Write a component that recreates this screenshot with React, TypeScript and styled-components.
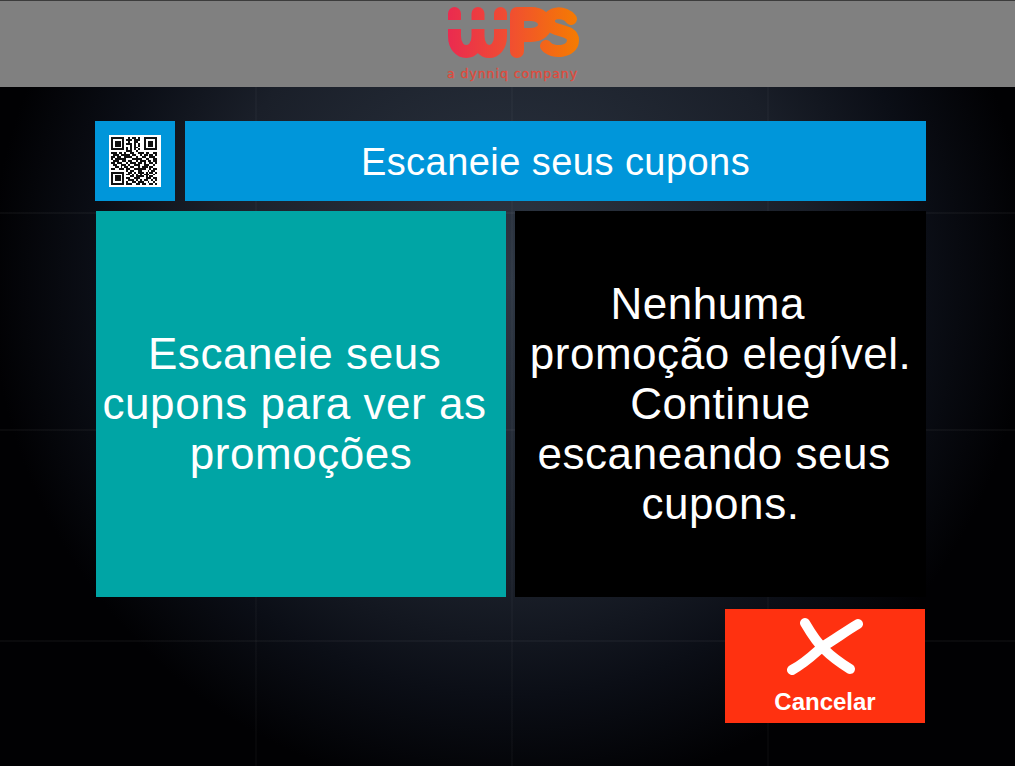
import React from "react";
import styled, { createGlobalStyle } from "styled-components";

const Global = createGlobalStyle`
  html, body {
    margin: 0;
    padding: 0;
    background: #000;
  }
`;

const Screen = styled.div`
  width: 1015px;
  height: 766px;
  overflow: hidden;
  font-family: "Liberation Sans", Arial, sans-serif;
  color: #fff;
  background-color: #000;
  background-image:
    linear-gradient(90deg, transparent 255px, rgba(255, 255, 255, 0.025) 255px, rgba(255, 255, 255, 0.025) 257px, transparent 257px),
    linear-gradient(90deg, transparent 511px, rgba(255, 255, 255, 0.025) 511px, rgba(255, 255, 255, 0.025) 513px, transparent 513px),
    linear-gradient(90deg, transparent 767px, rgba(255, 255, 255, 0.025) 767px, rgba(255, 255, 255, 0.025) 769px, transparent 769px),
    linear-gradient(180deg, transparent 212px, rgba(255, 255, 255, 0.035) 212px, rgba(255, 255, 255, 0.035) 214px, transparent 214px),
    linear-gradient(180deg, transparent 429px, rgba(255, 255, 255, 0.035) 429px, rgba(255, 255, 255, 0.035) 431px, transparent 431px),
    linear-gradient(180deg, transparent 640px, rgba(255, 255, 255, 0.035) 640px, rgba(255, 255, 255, 0.035) 642px, transparent 642px),
    radial-gradient(ellipse 520px 520px at 510px 280px, #2e3744 0%, #1a1f29 58%, #0b0e16 80%, #010103 100%);
`;

const Header = styled.header`
  height: 87px;
  box-sizing: border-box;
  border-top: 1px solid #3c3c3c;
  padding-left: 10px;
  background: #808080;
  display: flex;
  flex-direction: column;
  align-items: center;
`;

const Logo = styled.svg`
  display: block;
  width: 132px;
  height: 54px;
  margin-top: 5px;
`;

const Tagline = styled.div`
  font-family: "DejaVu Sans", sans-serif;
  font-size: 12.5px;
  line-height: 14px;
  letter-spacing: 0.95px;
  white-space: nowrap;
  margin-top: 7px;
  color: #e04b3c;
  -webkit-text-stroke: 0.3px #e04b3c;
`;

const Main = styled.main`
  width: 831px;
  margin: 34px 0 0 95px;
  display: flex;
  flex-direction: column;
`;

const TitleRow = styled.div`
  display: flex;
  gap: 10px;
  height: 80px;
`;

const QrBox = styled.div`
  width: 80px;
  background: #0096da;
  display: flex;
  align-items: center;
  justify-content: center;
`;

const TitleBar = styled.h1`
  flex: 1;
  margin: 0;
  padding-top: 2px;
  box-sizing: border-box;
  background: #0096da;
  display: flex;
  align-items: center;
  justify-content: center;
  font-size: 38px;
  font-weight: 400;
  letter-spacing: 0.45px;
`;

const Panels = styled.div`
  display: flex;
  gap: 9px;
  margin: 10px 0 0 1px;
  height: 386px;
`;

const Panel = styled.div<{ $bg: string; $width: number }>`
  width: ${(p) => p.$width}px;
  background: ${(p) => p.$bg};
  display: flex;
  align-items: center;
  justify-content: center;
  text-align: center;
  font-size: 44px;
  line-height: 50px;
  letter-spacing: 0.55px;
  white-space: pre;
`;

const Footer = styled.div`
  display: flex;
  justify-content: flex-end;
  margin: 12px 1px 0 0;
`;

const CancelButton = styled.button`
  width: 200px;
  height: 114px;
  border: 0;
  padding: 8px 0 0;
  background: #ff3110;
  color: #fff;
  font-family: "Liberation Sans", Arial, sans-serif;
  font-size: 24px;
  font-weight: 700;
  line-height: 28px;
  display: flex;
  flex-direction: column;
  align-items: center;
`;

const CancelIcon = styled.svg`
  display: block;
  width: 90px;
  height: 60px;
  margin-bottom: 11px;
`;

const qrRows = [
  "1111111001011010011111110",
  "1000001011101110010000010",
  "1011101001001100010111010",
  "1011101011101010010111010",
  "1011101000101010010111010",
  "1000001010101100010000010",
  "1111111010101010011111110",
  "0000000011100100000000000",
  "1110110100110011101100110",
  "0111011111011001011011010",
  "1101100111100100110011100",
  "1011111100011111001100110",
  "0111001101100101110110110",
  "1101110010111011010011010",
  "0110011101001110011100100",
  "0011010110110010111011000",
  "1100111011001111110010110",
  "0000000010110011000101100",
  "1111111001101011101011010",
  "1000001011010101011100100",
  "1011101000110111101011000",
  "1011101011001110001110110",
  "1011101001110101011001010",
  "1000001010011011100100100",
  "1111111011100110110011010",
];

const QrCode = () => (
  <svg width="52" height="52" viewBox="-1 -1 27 27" shapeRendering="crispEdges">
    <rect x="-1" y="-1" width="27" height="27" fill="#fff" />
    {qrRows.map((row, y) =>
      row.split("").map((cell, x) =>
        cell === "1" ? <rect key={`${x}-${y}`} x={x} y={y} width="1" height="1" fill="#111" /> : null
      )
    )}
  </svg>
);

const App = () => (
  <>
    <Global />
    <Screen>
      <Header>
        <Logo viewBox="0 0 132 54">
          <defs>
            <linearGradient id="wps" x1="0" y1="0" x2="132" y2="0" gradientUnits="userSpaceOnUse">
              <stop offset="0" stopColor="#ea2a50" />
              <stop offset="0.5" stopColor="#f1502f" />
              <stop offset="1" stopColor="#f57c00" />
            </linearGradient>
          </defs>
          <g fill="none" stroke="url(#wps)" strokeLinecap="round" strokeLinejoin="round">
            <path
              d="M7.5 7.5 V30 C7.5 50.7 31 50.7 31 30 V7.5 M31 30 C31 50.7 53.5 50.7 53.5 30 V7.5"
              strokeWidth="13"
            />
            <path d="M70 45 V8 H84 C102.7 8 102.7 29 84 29 H70" strokeWidth="14" />
            <path d="M124 13 C118 5 101 5 102 16 C103 27 126 22 126 34 C126 47 105 48 99 40" strokeWidth="12" />
          </g>
          <rect x="0" y="14" width="62" height="9" fill="#808080" />
        </Logo>
        <Tagline>a dynniq company</Tagline>
      </Header>
      <Main>
        <TitleRow>
          <QrBox>
            <QrCode />
          </QrBox>
          <TitleBar>Escaneie seus cupons</TitleBar>
        </TitleRow>
        <Panels>
          <Panel $bg="#00a5a5" $width={410}>{"Escaneie seus \ncupons para ver as \npromoções"}</Panel>
          <Panel $bg="#000" $width={411}>{"Nenhuma  \npromoção elegível.\nContinue\nescaneando seus \ncupons."}</Panel>
        </Panels>
        <Footer>
          <CancelButton>
            <CancelIcon viewBox="0 0 90 60">
              <path
                d="M25 6 C32 18 38 27 45 33 C52 40 62 47 70 52 M12 53 C25 46 33 38 42 30 C54 23 66 14 78 7"
                fill="none"
                stroke="#fff"
                strokeWidth="10"
                strokeLinecap="round"
              />
            </CancelIcon>
            Cancelar
          </CancelButton>
        </Footer>
      </Main>
    </Screen>
  </>
);

export default App;
